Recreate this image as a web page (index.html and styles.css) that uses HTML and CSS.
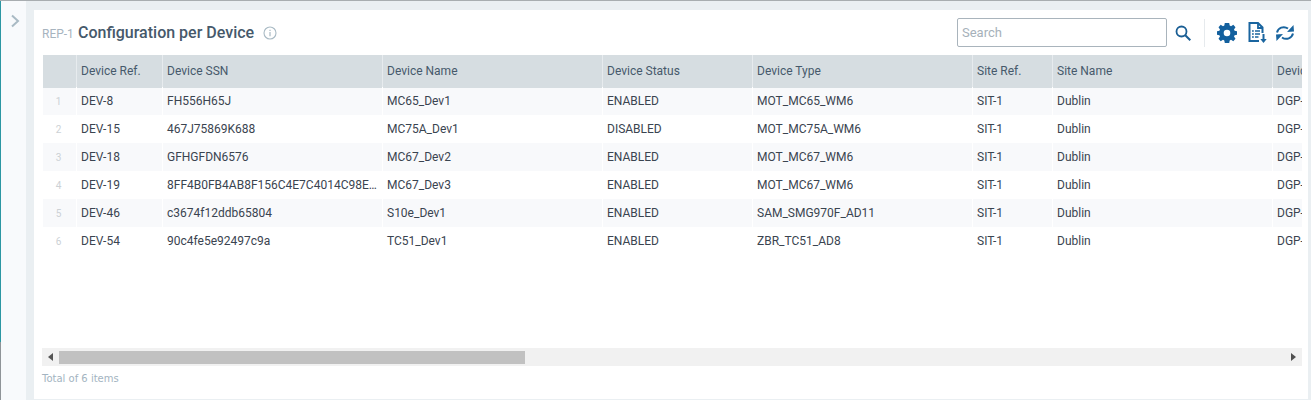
FILE: index.html
```html
<!DOCTYPE html>
<html lang="en">
<head>
<meta charset="utf-8">
<title>Configuration per Device</title>
<link rel="stylesheet" href="styles.css">
</head>
<body>
<div class="app">
  <aside class="rail">
    <svg class="chev" width="10" height="14" viewBox="0 0 10 14"><path d="M2 1.500 8 7l-6 5.500" fill="none" stroke="#a9bac4" stroke-width="2"/></svg>
  </aside>
  <main class="card">
    <header class="head">
      <span class="rep">REP-1</span>
      <h1 class="title">Configuration per Device</h1>
      <svg class="info" width="14" height="14" viewBox="0 0 14 14"><circle cx="7" cy="7" r="6" fill="none" stroke="#a9bac4" stroke-width="1.100"/><path d="M7 6v4.200M7 3.800v1.200" stroke="#a9bac4" stroke-width="1.200"/></svg>
      <div class="tools">
        <input class="search" placeholder="Search">
        <svg class="mag" width="18" height="18" viewBox="0 0 18 18"><circle cx="7.500" cy="7.500" r="5" fill="none" stroke="#1a5e94" stroke-width="1.800"/><path d="m11.300 11.300 5 5" stroke="#1a5e94" stroke-width="2"/></svg>
        <span class="sep"></span>
        <svg class="gear" width="20" height="20" viewBox="0 0 20 20"><path fill="#13609e" fill-rule="evenodd" d="M7.800 0h4.400l.5 2.600 1.300.6 2.300-1.500 2.200 2.500-1.500 2.200.6 1.400 2.400.5v3.400l-2.400.5-.6 1.400 1.500 2.200-2.200 2.500-2.300-1.500-1.300.6-.5 2.600H7.800l-.5-2.600-1.300-.6-2.300 1.500-2.200-2.500 1.500-2.200-.6-1.400L0 11.700V8.300l2.400-.5.600-1.400-1.500-2.200 2.200-2.500L6 3.200l1.300-.6zM10 6.700a3.300 3.300 0 1 0 0 6.600 3.300 3.300 0 0 0 0-6.600z"/></svg>
        <svg class="doc" width="20" height="22" viewBox="0 0 20 22"><path d="M11 19H1.500V1H10l4.500 4.500V11" fill="none" stroke="#1a659f" stroke-width="2"/><path d="M10 1v5h4.500" fill="none" stroke="#1a659f" stroke-width="1.800"/><path d="M4 9h1.800M7 9h5M4 12h1.800M7 12h5M4 15h1.800M7 15h3.500" stroke="#1a659f" stroke-width="1.600"/><path d="M15.500 12v6" stroke="#1a659f" stroke-width="2"/><path d="m12.300 17 3.200 4 3.200-4z" fill="#1a659f"/></svg>
        <svg class="sync" width="20" height="18" viewBox="0 0 20 18"><path d="M2 8.500C3 4 8.500 1.500 13 4.500M18 9.500C17 14 11.500 16.500 7 13.500" fill="none" stroke="#1a659f" stroke-width="2"/><path d="m12 8 7-.5-.5-6.500zM8 10l-7 .5.500 6.500z" fill="#1a659f"/></svg>
      </div>
    </header>
    <div class="grid-wrap">
      <table class="grid">
        <colgroup>
          <col class="c0"><col class="c1"><col class="c2"><col class="c3"><col class="c4"><col class="c5"><col class="c6"><col class="c7"><col class="c8">
        </colgroup>
        <thead>
          <tr><th></th><th>Device Ref.</th><th>Device SSN</th><th>Device Name</th><th>Device Status</th><th>Device Type</th><th>Site Ref.</th><th>Site Name</th><th>Device Group</th></tr>
        </thead>
        <tbody>
          <tr><td class="num">1</td><td>DEV-8</td><td>FH556H65J</td><td>MC65_Dev1</td><td>ENABLED</td><td>MOT_MC65_WM6</td><td>SIT-1</td><td>Dublin</td><td>DGP-1</td></tr>
          <tr><td class="num">2</td><td>DEV-15</td><td>467J75869K688</td><td>MC75A_Dev1</td><td>DISABLED</td><td>MOT_MC75A_WM6</td><td>SIT-1</td><td>Dublin</td><td>DGP-1</td></tr>
          <tr><td class="num">3</td><td>DEV-18</td><td>GFHGFDN6576</td><td>MC67_Dev2</td><td>ENABLED</td><td>MOT_MC67_WM6</td><td>SIT-1</td><td>Dublin</td><td>DGP-1</td></tr>
          <tr><td class="num">4</td><td>DEV-19</td><td>8FF4B0FB4AB8F156C4E7C4014C98E5A2</td><td>MC67_Dev3</td><td>ENABLED</td><td>MOT_MC67_WM6</td><td>SIT-1</td><td>Dublin</td><td>DGP-1</td></tr>
          <tr><td class="num">5</td><td>DEV-46</td><td>c3674f12ddb65804</td><td>S10e_Dev1</td><td>ENABLED</td><td>SAM_SMG970F_AD11</td><td>SIT-1</td><td>Dublin</td><td>DGP-1</td></tr>
          <tr><td class="num">6</td><td>DEV-54</td><td>90c4fe5e92497c9a</td><td>TC51_Dev1</td><td>ENABLED</td><td>ZBR_TC51_AD8</td><td>SIT-1</td><td>Dublin</td><td>DGP-1</td></tr>
        </tbody>
      </table>
    </div>
    <div class="scroll">
      <span class="arrow-l"></span>
      <span class="thumb"></span>
      <span class="arrow-r"></span>
    </div>
    <footer class="total">Total of 6 items</footer>
  </main>
</div>
</body>
</html>
```
FILE: styles.css
```css
html, body { margin: 0; height: 100%; }
body { width: 1311px; height: 400px; overflow: hidden; background: #eaeff2; font-family: Roboto, sans-serif; }
.app { display: flex; height: 399px; border-top: 1px solid #a8adb0; }
.rail { width: 26px; flex: none; background: linear-gradient(#2c97a3, #2c97a3) left top / 1px 341px no-repeat, linear-gradient(#8f9498, #8f9498) left top / 1px 100% no-repeat, #f8fafc; height: 399px; }
.chev { display: block; margin: 13px 0 0 10px; }
.card { margin: 9px 3px 1px 8px; width: 1274px; background: #fff; display: flex; flex-direction: column; padding-left: 8px; box-sizing: border-box; }
.head { display: flex; align-items: center; height: 45px; }
.rep { font-size: 12px; color: #a7b4bf; margin-top: 3px; width: 36px; }
.title { margin: 0; font-size: 16px; line-height: 24px; font-weight: 500; color: #46596b; }
.info { margin-left: 9px; }
.tools { margin-left: auto; display: flex; align-items: center; margin-right: 13px; }
.search { width: 210px; height: 29px; box-sizing: border-box; border: 1px solid #a9b4bc; border-radius: 2px; padding: 0 4px; font: 13px Roboto, sans-serif; background: #fff; }
.search::placeholder { color: #a6b1ba; opacity: 1; }
.mag { margin-left: 7px; }
.sep { width: 1px; height: 28px; background: #e6eaed; margin-left: 12px; }
.gear { margin-left: 12px; }
.doc { margin-left: 11px; }
.sync { margin-left: 7px; }
.grid-wrap { width: 1260px; height: 293px; overflow: hidden; }
.grid { table-layout: fixed; width: 1380px; border-collapse: collapse; font-size: 12px; }
.c0 { width: 34px; } .c1 { width: 86px; } .c2 { width: 220px; } .c3 { width: 220px; } .c4 { width: 150px; } .c5 { width: 220px; } .c6 { width: 80px; } .c7 { width: 220px; } .c8 { width: 150px; }
.grid th { height: 32px; padding: 0 0 0 4px; background: #d6dde1; color: #46596b; font-weight: 400; text-align: left; border-left: 1px solid #e7ebee; white-space: nowrap; overflow: hidden; }
.grid th:first-child { border-left: 0; }
.grid td { height: 28px; padding: 0 0 0 4px; color: #3a4450; white-space: nowrap; overflow: hidden; text-overflow: ellipsis; border-left: 1px solid transparent; }
.grid tbody tr:nth-child(odd) { background: #f8f9fb; }
.grid tbody tr:first-child td { box-shadow: inset 0 1px 0 #d6dde1; }
.grid .num { color: #ccd1d5; font-size: 10px; text-align: center; padding: 0 2px 0 0; }
.scroll { width: 1260px; height: 18px; background: #f1f1f1; display: flex; align-items: center; }
.arrow-l { width: 0; height: 0; margin-left: 6px; border: 4px solid transparent; border-left: 0; border-right: 5px solid #555; }
.thumb { width: 466px; height: 13px; background: #c1c1c1; margin-left: 6px; }
.arrow-r { width: 0; height: 0; margin-left: auto; margin-right: 6px; border: 4px solid transparent; border-right: 0; border-left: 5px solid #505050; }
.total { font: 10px "DejaVu Sans", sans-serif; color: #a3b4c1; margin-top: 7px; }
```
